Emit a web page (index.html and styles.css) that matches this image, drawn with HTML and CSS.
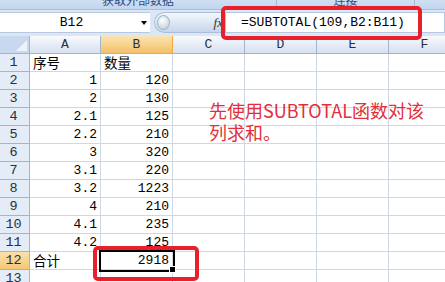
FILE: index.html
```html
<!DOCTYPE html>
<html lang="zh-CN">
<head>
  <meta charset="UTF-8">
  <title>SUBTOTAL</title>
  <link rel="stylesheet" href="styles.css">
</head>
<body>
  <div class="app">

    <!-- ribbon bottom edge -->
    <div class="ribbon">
      <div class="group g1"><span>获取外部数据</span></div>
      <div class="group g2"><span>连接</span></div>
      <div class="group g3"></div>
    </div>

    <!-- formula bar -->
    <div class="formula-bar">
      <div class="name-box"><span class="name">B12</span><span class="arrow"></span></div>
      <div class="splitter"><span class="knob"></span><span class="fx">fx</span></div>
      <div class="formula">=SUBTOTAL(109,B2:B11)</div>
    </div>

    <!-- sheet -->
    <div class="sheet">
      <div class="corner"></div>
      <div class="col-head">A</div>
      <div class="col-head sel">B</div>
      <div class="col-head">C</div>
      <div class="col-head">D</div>
      <div class="col-head">E</div>
      <div class="col-head">F</div>

      <div class="row-head">1</div>
      <div class="cell cn">序号</div>
      <div class="cell cn">数量</div>
      <div class="cell"></div><div class="cell"></div><div class="cell"></div><div class="cell"></div>

      <div class="row-head">2</div>
      <div class="cell num">1</div>
      <div class="cell num">120</div>
      <div class="cell"></div><div class="cell"></div><div class="cell"></div><div class="cell"></div>

      <div class="row-head">3</div>
      <div class="cell num">2</div>
      <div class="cell num">130</div>
      <div class="cell"></div><div class="cell"></div><div class="cell"></div><div class="cell"></div>

      <div class="row-head">4</div>
      <div class="cell num">2.1</div>
      <div class="cell num">125</div>
      <div class="cell"></div><div class="cell"></div><div class="cell"></div><div class="cell"></div>

      <div class="row-head">5</div>
      <div class="cell num">2.2</div>
      <div class="cell num">210</div>
      <div class="cell"></div><div class="cell"></div><div class="cell"></div><div class="cell"></div>

      <div class="row-head">6</div>
      <div class="cell num">3</div>
      <div class="cell num">320</div>
      <div class="cell"></div><div class="cell"></div><div class="cell"></div><div class="cell"></div>

      <div class="row-head">7</div>
      <div class="cell num">3.1</div>
      <div class="cell num">220</div>
      <div class="cell"></div><div class="cell"></div><div class="cell"></div><div class="cell"></div>

      <div class="row-head">8</div>
      <div class="cell num">3.2</div>
      <div class="cell num">1223</div>
      <div class="cell"></div><div class="cell"></div><div class="cell"></div><div class="cell"></div>

      <div class="row-head">9</div>
      <div class="cell num">4</div>
      <div class="cell num">210</div>
      <div class="cell"></div><div class="cell"></div><div class="cell"></div><div class="cell"></div>

      <div class="row-head">10</div>
      <div class="cell num">4.1</div>
      <div class="cell num">235</div>
      <div class="cell"></div><div class="cell"></div><div class="cell"></div><div class="cell"></div>

      <div class="row-head">11</div>
      <div class="cell num">4.2</div>
      <div class="cell num">125</div>
      <div class="cell"></div><div class="cell"></div><div class="cell"></div><div class="cell"></div>

      <div class="row-head sel">12</div>
      <div class="cell cn">合计</div>
      <div class="cell num active">2918<span class="handle"></span></div>
      <div class="cell"></div><div class="cell"></div><div class="cell"></div><div class="cell"></div>

      <div class="row-head">13</div>
      <div class="cell"></div><div class="cell"></div><div class="cell"></div>
      <div class="cell"></div><div class="cell"></div><div class="cell"></div>
    </div>

    <!-- annotations -->
    <div class="mark mark-formula"></div>
    <div class="mark mark-total"></div>
    <div class="note">先使用SUBTOTAL函数对该<br>列求和。</div>
  </div>
</body>
</html>
```

FILE: styles.css
```css
body {
  margin: 0;
  background: #fff;
  overflow: hidden;
  font-family: "Liberation Mono", "Noto Sans CJK SC", monospace;
}

.app {
  position: relative;
  width: 445px;
  height: 282px;
  overflow: hidden;
  background: #dde7f4;
}

/* ribbon */
.ribbon {
  display: flex;
  height: 9px;
  overflow: hidden;
  background: linear-gradient(#cfdff3, #c2d5ee);
  border-bottom: 1px solid #a7bfdf;
}

.group {
  height: 9px;
  border-right: 1px solid #9fb9da;
  text-align: center;
  font-family: "Noto Sans CJK SC", sans-serif;
  font-size: 12px;
  line-height: 12px;
  color: #2c4d83;
}

.group span {
  display: block;
  margin-top: -6px;
}

.g1 { width: 276px; }
.g2 { width: 137px; }
.g3 { flex: 1; border-right: none; }

/* formula bar */
.formula-bar {
  display: flex;
  align-items: stretch;
  height: 21px;
  margin-top: 2px;
  padding-bottom: 3px;
}

.name-box {
  display: flex;
  align-items: center;
  width: 150px;
  background: #fff;
  border-top: 1px solid #b6c8df;
  border-bottom: 1px solid #b6c8df;
}

.name {
  flex: 1;
  text-align: center;
  font-size: 13px;
  padding-left: 2px;
  color: #000;
}

.arrow {
  width: 0;
  height: 0;
  margin-right: 3px;
  border-left: 3px solid transparent;
  border-right: 3px solid transparent;
  border-top: 4px solid #000;
}

.splitter {
  display: flex;
  align-items: center;
  width: 70px;
  margin-left: 4px;
  border-radius: 11px 0 0 11px;
  background: linear-gradient(#f4f8fc, #c7d6ea);
  border: 1px solid #a9bedb;
  border-right: none;
}

.knob {
  width: 11px;
  height: 13px;
  margin-left: 2px;
  border-radius: 50%;
  background: radial-gradient(circle at 40% 35%, #fff, #b8c7d8);
  border: 1px solid #a4b6cb;
}

.fx {
  margin-left: auto;
  margin-right: 2px;
  font-family: "Liberation Serif", serif;
  font-style: italic;
  font-size: 13px;
  color: #333;
}

.formula {
  flex: 1;
  background: #fff;
  border: 1px solid #b6c8df;
  padding-left: 15px;
  font-size: 13px;
  line-height: 19px;
  color: #000;
}

/* sheet */
.sheet {
  display: grid;
  grid-template-columns: 30px 71px 72px 72px 72px 72px 72px;
  grid-auto-rows: 18px;
  background: #fff;
  font-size: 13px;
}

.sheet > div {
  box-sizing: border-box;
  line-height: 17px;
  white-space: nowrap;
}

.corner {
  background: #c8d8ee;
  border-right: 1px solid #9eb6ce;
  border-bottom: 1px solid #9eb6ce;
  position: relative;
}

.corner::after {
  content: "";
  position: absolute;
  right: 2px;
  bottom: 2px;
  border-left: 11px solid transparent;
  border-bottom: 11px solid #eef3fa;
}

.col-head {
  text-align: center;
  background: linear-gradient(#f8fafd, #e3eaf5 60%, #d7e1ef);
  border-right: 1px solid #9eb6ce;
  border-bottom: 1px solid #9eb6ce;
  color: #27313e;
}

.col-head.sel {
  background: linear-gradient(#fbe3b3, #f7cf86 60%, #f3c06a);
  border-right-color: #f2a83c;
  border-bottom-color: #f2a83c;
}

.row-head {
  text-align: center;
  background: #e4ecf7;
  border-right: 1px solid #9eb6ce;
  border-bottom: 1px solid #9eb6ce;
  color: #27313e;
  font-size: 13.5px;
  padding-right: 2px;
}

.row-head.sel {
  background: linear-gradient(#fbe0ab, #f5c777);
  border-bottom-color: #f2a83c;
}

.cell {
  border-right: 1px solid #d0d7e5;
  border-bottom: 1px solid #d0d7e5;
  color: #000;
  padding: 0 3px;
}

.cell.cn {
  font-family: "Noto Sans CJK SC", sans-serif;
  font-size: 13.5px;
  line-height: 17px;
}

.cell.num {
  text-align: right;
}

.cell.active {
  position: relative;
  outline: 2px solid #000;
  outline-offset: 0;
  z-index: 1;
}

.handle {
  position: absolute;
  right: -4px;
  bottom: -4px;
  width: 5px;
  height: 5px;
  background: #000;
  border: 1px solid #fff;
}

/* annotations */
.mark {
  position: absolute;
  box-sizing: border-box;
  border: 4px solid #e8202b;
  border-radius: 5px;
  z-index: 2;
}

.mark-formula {
  left: 221px;
  top: 6px;
  width: 201px;
  height: 34px;
}

.mark-total {
  left: 93px;
  top: 246px;
  width: 106px;
  height: 35px;
}

.note {
  position: absolute;
  left: 209px;
  top: 99px;
  font-family: "Noto Sans CJK SC", sans-serif;
  font-size: 18px;
  line-height: 22px;
  color: #e22f3b;
  z-index: 2;
}
```
